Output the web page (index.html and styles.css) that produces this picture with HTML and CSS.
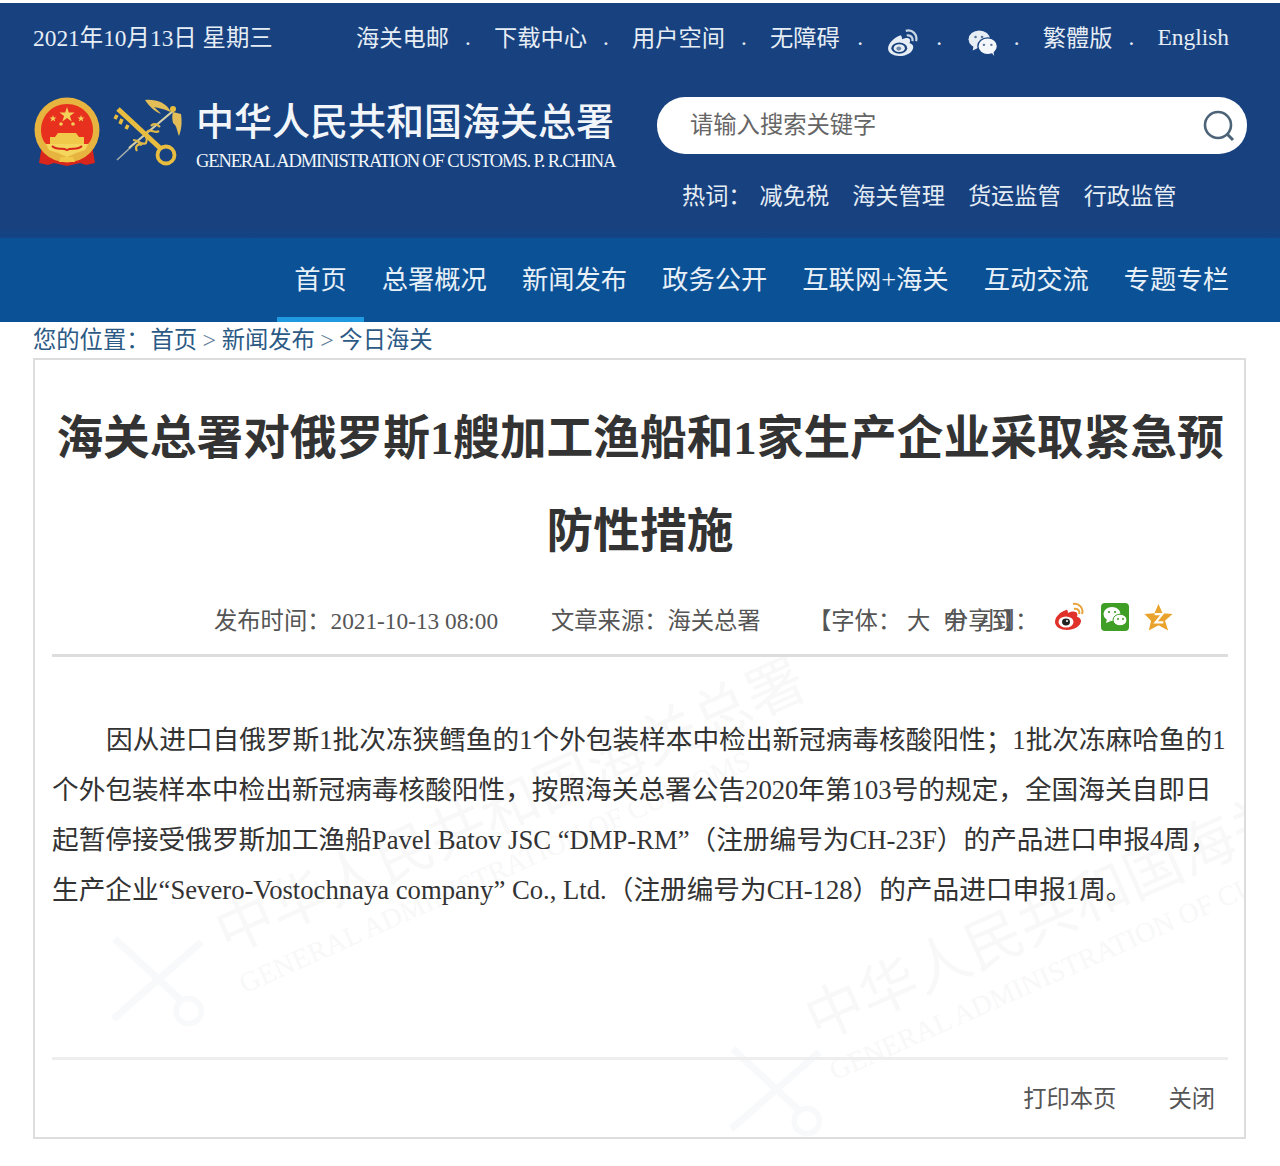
FILE: index.html
```html
<!DOCTYPE html>
<html lang="zh-CN">
<head>
    <meta charset="UTF-8">
    <title>海关总署对俄罗斯1艘加工渔船和1家生产企业采取紧急预防性措施</title>
    <link rel="stylesheet" href="styles.css">
</head>
<body>
    <header class="header">
        <div class="top-bar">
            <div class="date">2021年10月13日 星期三</div>
            <div class="top-links">
                <a>海关电邮</a><i class="dot">.</i>
                <a>下载中心</a><i class="dot">.</i>
                <a>用户空间</a><i class="dot">.</i>
                <a>无障碍</a><i class="dot dot-wide">.</i>
                <svg class="top-icon" viewBox="0 0 32 30">
                    <path fill="#e6edf5" d="M13 7C7 9 0 15 0 21c0 5 6 8 12 8 8 0 15-4 15-10 0-2-2-3-4-4 1-2 1-4-1-5-2-1-5 0-7 1 0-2-1-5-2-4z"/>
                    <ellipse cx="12" cy="20.500" rx="8.500" ry="6" fill="#17417f"/>
                    <ellipse cx="12" cy="20.500" rx="6" ry="4.200" fill="#e6edf5"/>
                    <ellipse cx="11.500" cy="21" rx="2.600" ry="2.200" fill="#6f88a8"/>
                    <path fill="none" stroke="#c9d6e6" stroke-width="2.400" d="M20 7c4-1 7 2 6 6M19 2c7-2 13 4 11 11"/>
                </svg>
                <i class="dot dot-wider">.</i>
                <svg class="top-icon" viewBox="0 0 32 30">
                    <ellipse cx="12" cy="11" rx="11.500" ry="9.500" fill="#e6edf5"/>
                    <path fill="#e6edf5" d="M6 17l-1 6 6-3z"/>
                    <ellipse cx="21" cy="18.500" rx="10.500" ry="9" fill="#f4f7fb" stroke="#17417f" stroke-width="1.500"/>
                    <path fill="#f4f7fb" d="M25 25l3 4-1-6z"/>
                    <circle cx="8" cy="8.500" r="1.400" fill="#5a7397"/><circle cx="15" cy="8.500" r="1.400" fill="#5a7397"/>
                    <circle cx="17" cy="17" r="1.300" fill="#5a7397"/><circle cx="25" cy="17" r="1.300" fill="#5a7397"/>
                </svg>
                <i class="dot">.</i>
                <a>繁體版</a><i class="dot">.</i>
                <a class="latin">English</a>
            </div>
        </div>
        <div class="brand-row">
            <div class="brand">
                <svg class="emblem" viewBox="0 0 68 72">
                    <path fill="#d8261c" d="M9 48L6 66l9 2 6-2 13 3 13-3 6 2 9-2-3-18z"/>
                    <circle cx="34" cy="33" r="32.500" fill="#e8b440"/>
                    <path fill="#e8301f" d="M34 7C19 7 8 19 8 33c0 6 2 11 5 14h42c3-3 5-8 5-14C60 19 49 7 34 7z"/>
                    <path fill="#f4d25a" d="M34 10l1.800 5.500h5.800l-4.700 3.400 1.800 5.500-4.700-3.400-4.700 3.400 1.800-5.500-4.700-3.400h5.800z"/>
                    <path fill="#f4d25a" d="M20 18l.9 2.500h2.600l-2.100 1.600.8 2.500-2.200-1.500-2.200 1.500.8-2.500-2.100-1.600h2.600zM48 18l.9 2.500h2.600l-2.100 1.600.8 2.500-2.200-1.500-2.200 1.500.8-2.500-2.100-1.600h2.600z"/>
                    <circle cx="28" cy="27" r="1.800" fill="#f4d25a"/><circle cx="40" cy="27" r="1.800" fill="#f4d25a"/>
                    <path fill="#f0c94a" d="M25 36h18l3 4H22zM17 40h34v7H17z"/>
                    <path fill="#f5d65c" d="M13 47h42l-3 6-9 3-9 4-9-4-9-3z"/>
                    <path fill="none" stroke="#d8261c" stroke-width="2" d="M19 49c5 5 10 1 15 4 5-3 10 1 15-4"/>
                    <path fill="#f0c94a" d="M28 60h12l2 5H26z"/>
                </svg>
                <svg class="customs" viewBox="0 0 70 68">
                    <path fill="none" stroke="#a9b0ac" stroke-width="1.500" d="M4 62l14-13"/>
                    <path fill="none" stroke="#d5cfa8" stroke-width="2.200" d="M16 50L60 13"/>
                    <path fill="none" stroke="#e0b848" stroke-width="2.200" d="M20 42c6 0 8 6 13 3 3-5-3-8 2-12 4-2 7 3 11 0M24 53c-3-5 2-8 5-6M38 28c3-4 7-1 9 1"/>
                    <path fill="none" stroke="#e8bd3f" stroke-width="5" d="M5 11l42 39"/>
                    <path fill="none" stroke="#e8bd3f" stroke-width="3.500" d="M4 17l-2 4M9 21l-2 5M15 27l-2 4"/>
                    <circle cx="53" cy="57" r="8.500" fill="none" stroke="#e8bd3f" stroke-width="3.800"/>
                    <path fill="#e2bd58" d="M32 2c10-1 21 2 26 12-8-3-12-4-17-5 2 2 5 4 7 7-6-2-12-8-16-14z"/>
                    <path fill="#e2bd58" d="M60 14l8 2c1 7 1 14-2 22-2-5-2-10-6-13-1-4-1-8 0-11z"/>
                    <circle cx="60" cy="11" r="3" fill="#e8bd3f"/>
                </svg>
                <div class="brand-text">
                    <div class="brand-cn">中华人民共和国海关总署</div>
                    <div class="brand-en">GENERAL ADMINISTRATION OF CUSTOMS. P. R.CHINA</div>
                </div>
            </div>
            <div class="search-col">
                <div class="search">
                    <span class="search-text">请输入搜索关键字</span>
                    <svg class="search-icon" viewBox="0 0 32 32">
                        <circle cx="15" cy="15" r="13" fill="none" stroke="#4d6478" stroke-width="2.600"/>
                        <path stroke="#4d6478" stroke-width="3" d="M24 24l6 6"/>
                    </svg>
                </div>
                <div class="hot">
                    <span class="hot-label">热词&#xFF1A;</span>
                    <a>减免税</a><a>海关管理</a><a>货运监管</a><a>行政监管</a>
                </div>
            </div>
        </div>
    </header>

    <nav class="nav">
        <a class="active">首页</a>
        <a>总署概况</a>
        <a>新闻发布</a>
        <a>政务公开</a>
        <a>互联网+海关</a>
        <a>互动交流</a>
        <a>专题专栏</a>
    </nav>

    <div class="crumbs">
        <span class="crumbs-label">您的位置&#xFF1A;</span><a>首页</a><i>&gt;</i><a>新闻发布</a><i>&gt;</i><a>今日海关</a>
    </div>

    <main class="article">
        <svg class="wm-logo wm-logo-one" viewBox="0 0 70 68">
            <path fill="none" stroke="#f8f9fa" stroke-width="4.500" d="M5 11l42 39M4 62L60 13"/>
            <circle cx="52" cy="57" r="8" fill="none" stroke="#f8f9fa" stroke-width="3.500"/>
        </svg>
        <svg class="wm-logo wm-logo-two" viewBox="0 0 70 68">
            <path fill="none" stroke="#f8f9fa" stroke-width="4.500" d="M5 11l42 39M4 62L60 13"/>
            <circle cx="52" cy="57" r="8" fill="none" stroke="#f8f9fa" stroke-width="3.500"/>
        </svg>
        <div class="watermark wm-one">
            <div class="wm-cn">中华人民共和国海关总署</div>
            <div class="wm-en">GENERAL ADMINISTRATION OF CUSTOMS</div>
        </div>
        <div class="watermark wm-two">
            <div class="wm-cn">中华人民共和国海关总署</div>
            <div class="wm-en">GENERAL ADMINISTRATION OF CUSTOMS</div>
        </div>

        <h1 class="title">海关总署对俄罗斯1艘加工渔船和1家生产企业采取紧急预防性措施</h1>

        <div class="meta">
            <span class="meta-time">发布时间&#xFF1A;2021-10-13 08:00</span>
            <span class="meta-source">文章来源&#xFF1A;海关总署</span>
            <span class="meta-font">【字体&#xFF1A; <b>大</b><b>中</b><b>小</b><em>】</em><span class="share-label">分享到&#xFF1A;</span></span>
            <span class="share-icons">
                <svg class="share" viewBox="0 0 30 30">
                    <path fill="#e0312a" d="M12 8C6 10 1 15 1 20c0 5 6 8 12 8 7 0 14-4 14-9 0-2-2-4-4-4 1-3 0-5-2-5-2-1-5 0-7 1 0-2-1-4-2-3z"/>
                    <ellipse cx="12" cy="20" rx="7.500" ry="5.500" fill="#fff"/>
                    <ellipse cx="12" cy="20" rx="4" ry="3.400" fill="#222"/>
                    <circle cx="13" cy="19" r="1" fill="#fff"/>
                    <path fill="none" stroke="#e8a33a" stroke-width="2" d="M20 7c4-1 6 2 5 5M19 2c6-1 11 4 9 10"/>
                </svg>
                <svg class="share" viewBox="0 0 30 30">
                    <rect width="28" height="28" x="1" y="1" rx="4" fill="#3f9e25"/>
                    <ellipse cx="12" cy="12" rx="8.500" ry="7" fill="#fff"/>
                    <path fill="#fff" d="M7 17l-1 4 5-2z"/>
                    <ellipse cx="20" cy="18" rx="7" ry="5.800" fill="#fff" stroke="#3f9e25"/>
                    <circle cx="9" cy="10" r="1.100" fill="#3f9e25"/><circle cx="15" cy="10" r="1.100" fill="#3f9e25"/>
                    <circle cx="18" cy="17" r="1" fill="#3f9e25"/><circle cx="23" cy="17" r="1" fill="#3f9e25"/>
                </svg>
                <svg class="share share-star" viewBox="0 0 30 30">
                    <path fill="#e9a32c" d="M15 1l4.200 9.500 10.300 1-7.800 6.800L25 28.500l-10-5.500-10 5.500 2.300-10.200L.5 11.500l10.300-1z"/>
                    <path fill="none" stroke="#fff" stroke-width="2.200" d="M11 11.500h8l-7 8.500h8"/>
                </svg>
            </span>
        </div>

        <div class="body-text">
            <p>因从进口自俄罗斯1批次冻狭鳕鱼的1个外包装样本中检出新冠病毒核酸阳性&#xFF1B;1批次冻麻哈鱼的1个外包装样本中检出新冠病毒核酸阳性&#xFF0C;按照海关总署公告2020年第103号的规定&#xFF0C;全国海关自即日起暂停接受俄罗斯加工渔船Pavel Batov JSC “DMP-RM”&#xFF08;注册编号为CH-23F&#xFF09;的产品进口申报4周&#xFF0C;生产企业“Severo-Vostochnaya company” Co., Ltd.&#xFF08;注册编号为CH-128&#xFF09;的产品进口申报1周。</p>
        </div>

        <div class="article-foot">
            <a>打印本页</a><a>关闭</a>
        </div>
    </main>
</body>
</html>
```

FILE: styles.css
```css
/* base */
* {
    box-sizing: border-box;
}

body {
    margin: 0;
    height: 1166px;
    overflow: hidden;
    background-color: #fff;
    font-family: "Liberation Serif", "Noto Sans CJK SC", serif;
    color: #333;
}

a {
    text-decoration: none;
}

i, em {
    font-style: normal;
}

/* header */
.header {
    height: 235px;
    margin-top: 3px;
    padding: 0 33px;
    background: linear-gradient(#17417f 96%, #134486);
    color: #e6edf5;
}

.top-bar {
    display: flex;
    justify-content: space-between;
    align-items: center;
    height: 66px;
}

.date {
    font-size: 23.4px;
}

.top-links {
    display: flex;
    align-items: center;
    padding-right: 18px;
    font-size: 23.25px;
}

.latin {
    padding-top: 2px;
    font-size: 23.4px;
}

.dot {
    width: 45px;
    padding-right: 7px;
    text-align: center;
    position: relative;
    top: 1px;
}

.dot-wide {
    width: 48px;
}

.dot-wider {
    width: 50px;
}

.top-icon {
    width: 30px;
    height: 28px;
    margin-top: 13px;
}

.brand-row {
    display: flex;
    justify-content: space-between;
    padding-top: 28px;
}

.brand {
    display: flex;
    align-items: flex-start;
}

.emblem {
    width: 68px;
    height: 72px;
}

.customs {
    width: 70px;
    height: 68px;
    margin: 1px 0 0 12px;
}

.brand-text {
    margin: 1px 0 0 13px;
    color: #f2f6fa;
}

.brand-cn {
    font-size: 38px;
    font-weight: 500;
    line-height: 48px;
    white-space: nowrap;
}

.brand-en {
    font-size: 18.5px;
    line-height: 31px;
    letter-spacing: -1.12px;
    white-space: nowrap;
}

.search-col {
    width: 590px;
}

.search {
    display: flex;
    justify-content: space-between;
    align-items: center;
    height: 57px;
    padding: 0 12px 0 33px;
    background-color: #fff;
    border-radius: 28px;
}

.search-text {
    padding-bottom: 5px;
    font-size: 23.3px;
    color: #666;
}

.search-icon {
    width: 32px;
    height: 32px;
}

.hot {
    display: flex;
    gap: 23px;
    padding: 27px 0 0 25px;
    font-size: 23.2px;
    line-height: 30px;
}

.hot-label {
    margin-right: -15px;
}

/* main nav */
.nav {
    display: flex;
    justify-content: flex-end;
    height: 84px;
    padding-right: 33.5px;
    background-color: #0b5196;
}

.nav a {
    padding: 25px 17.5px 0;
    font-size: 26.3px;
    line-height: 36px;
    color: #e8f0f8;
}

.nav .active {
    border-bottom: 5px solid #1f9ae0;
}

/* breadcrumb */
.crumbs {
    height: 36px;
    padding-left: 33px;
    font-size: 23.3px;
    line-height: 37px;
    color: #2c5a85;
}

.crumbs-label {
    margin-right: 1px;
}

.crumbs i {
    margin: 0 5.5px;
    font-size: 24px;
    color: #5b7a96;
}

/* article */
.article {
    position: relative;
    width: 1213px;
    height: 781px;
    margin-left: 33px;
    padding: 32px 16px 0 17px;
    border: 2px solid #ddd;
    overflow: hidden;
}

.title {
    position: relative;
    margin: 0;
    font-size: 46.7px;
    font-weight: 700;
    line-height: 93px;
    text-align: center;
    color: #333;
}

.meta {
    position: relative;
    display: flex;
    align-items: center;
    height: 76px;
    margin-top: 3px;
    padding: 3px 0 0 162px;
    font-size: 23.3px;
    color: #555;
    border-bottom: 3px solid #ddd;
}

.meta-time {
    width: 337px;
}

.meta-source {
    width: 257px;
}

.meta-font {
    position: relative;
    white-space: nowrap;
    width: 246px;
}

.meta-font b {
    font-weight: 400;
    margin-right: 13px;
}

.meta-font em {
    margin-left: -13px;
}

.share-label {
    position: absolute;
    left: 137px;
    top: 0;
}

.share-icons {
    display: flex;
    align-items: center;
    gap: 16px;
    margin-top: -4px;
}

.share {
    width: 30px;
    height: 30px;
}

.share-star {
    width: 29px;
    height: 29px;
    margin-left: -2px;
}

.body-text {
    position: relative;
    height: 403px;
    padding-top: 58px;
    font-size: 26.67px;
    line-height: 50px;
    color: #333;
    border-bottom: 3px solid #eee;
    text-spacing-trim: space-all;
}

.body-text p {
    margin: 0;
    text-indent: 54px;
}

.article-foot {
    position: relative;
    display: flex;
    justify-content: flex-end;
    gap: 52px;
    padding: 21px 13px 0 0;
    font-size: 23.3px;
    line-height: 36px;
    color: #555;
}

/* faint watermark behind the article */
.watermark {
    position: absolute;
    transform: rotate(-24deg);
    transform-origin: left top;
    color: #f8f8f8;
    white-space: nowrap;
}

.wm-cn {
    font-size: 58px;
    line-height: 70px;
}

.wm-en {
    font-size: 28px;
    line-height: 36px;
}

.wm-one {
    left: 170px;
    top: 545px;
}

.wm-two {
    left: 760px;
    top: 632px;
}

.wm-logo {
    position: absolute;
    width: 110px;
    height: 110px;
}

.wm-logo-one {
    left: 72px;
    top: 560px;
}

.wm-logo-two {
    left: 690px;
    top: 670px;
}
```
